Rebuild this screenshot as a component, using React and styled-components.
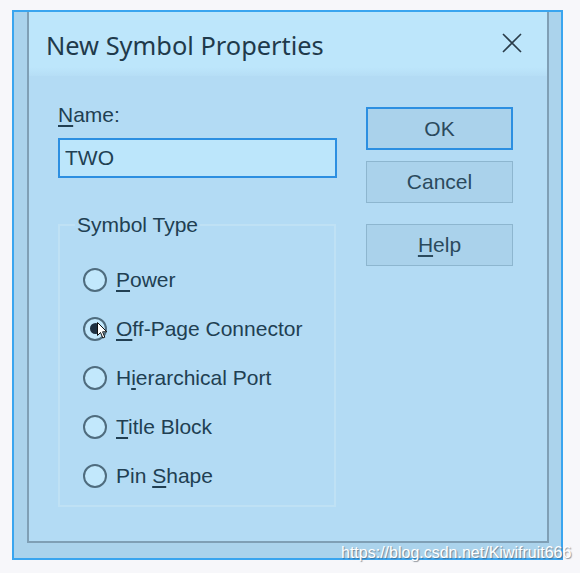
import React from 'react';
import styled, { createGlobalStyle } from 'styled-components';

const GlobalStyle = createGlobalStyle`
  html, body {
    margin: 0;
    padding: 0;
    background: #f7f7fa;
  }
`;

const Screen = styled.div`
  position: relative;
  width: 580px;
  height: 573px;
  padding: 10px 0 0 12px;
  box-sizing: border-box;
  font-family: "Liberation Sans", Arial, sans-serif;
  color: #213f52;
`;

const Window = styled.div`
  width: 551px;
  height: 550px;
  box-sizing: border-box;
  border: 2px solid #3aa5ef;
  background: #abd3ec;
  padding: 0 12px 15px 13px;
  display: flex;
`;

const Client = styled.div`
  flex: 1;
  display: flex;
  flex-direction: column;
  border: 2px solid #7f9fb5;
  border-top: none;
  background: #b3dbf4;
`;

const TitleBar = styled.div`
  height: 64px;
  box-sizing: border-box;
  padding: 16px 25px 0 17px;
  display: flex;
  justify-content: space-between;
  align-items: flex-start;
  background: linear-gradient(to bottom, #bde6fb 86%, #b6def6 100%);
`;

const Title = styled.div`
  font-family: "Noto Sans", "Open Sans", sans-serif;
  font-size: 25.4px;
  line-height: 34px;
  color: #1f3a4b;
`;

const CloseIcon = styled.svg`
  margin-top: 5px;
  width: 20px;
  height: 20px;
`;

const Body = styled.div`
  flex: 1;
  display: flex;
  gap: 29px;
  padding: 27px 0 0 29px;
`;

const LeftColumn = styled.div`
  width: 279px;
  display: flex;
  flex-direction: column;
`;

const Label = styled.div`
  font-size: 21px;
  line-height: 24px;
`;

const Mnemonic = styled.u`
  text-decoration-thickness: 2px;
  text-underline-offset: 3px;
`;

const NameInput = styled.input`
  margin: 11px 0 0;
  height: 40px;
  box-sizing: border-box;
  border: 2px solid #2c8fe1;
  background: #bce6fb;
  padding: 0 5px;
  font-family: "Liberation Sans", Arial, sans-serif;
  font-size: 21px;
  color: #213f52;
  outline: none;
`;

const GroupBox = styled.fieldset`
  margin: 35px 1px 0 0;
  padding: 0 0 5px 0;
  border: 2px solid #bfe1f4;
  min-width: 0;
`;

const Legend = styled.legend`
  margin-left: 15px;
  padding: 0 2px;
  font-size: 21px;
  line-height: 24px;
`;

const RadioList = styled.div`
  display: flex;
  flex-direction: column;
  padding: 18px 0 0 23px;
`;

const RadioRow = styled.div`
  position: relative;
  height: 49px;
  display: flex;
  align-items: center;
  gap: 9px;
  font-size: 21px;
`;

const RadioCircle = styled.span`
  width: 24px;
  height: 24px;
  box-sizing: border-box;
  border-radius: 50%;
  border: 2px solid #4f6c7e;
  background: #c2e8fc;
  display: flex;
  align-items: center;
  justify-content: center;

  &::after {
    content: '';
    display: ${props => (props.$checked ? 'block' : 'none')};
    width: 11px;
    height: 11px;
    border-radius: 50%;
    background: #1e3142;
  }
`;

const Cursor = styled.svg`
  position: absolute;
  left: 14px;
  top: 18px;
  width: 11px;
  height: 17px;
`;

const ButtonColumn = styled.div`
  width: 147px;
  display: flex;
  flex-direction: column;
  padding-top: 4px;
`;

const DialogButton = styled.button`
  margin-top: ${props => props.$top || 0}px;
  height: ${props => (props.$default ? 43 : 42)}px;
  box-sizing: border-box;
  border: ${props => (props.$default ? '2px solid #2c8fe1' : '1px solid #8db6cf')};
  background: #aad2eb;
  font-family: "Liberation Sans", Arial, sans-serif;
  font-size: 21px;
  color: #2b4a5d;
  padding: 0;
`;

const Watermark = styled.div`
  position: absolute;
  left: 341px;
  top: 543px;
  font-family: "Liberation Sans", Arial, sans-serif;
  font-size: 16px;
  line-height: 19px;
  color: #ffffff;
  text-shadow: 1px 1px 1px rgba(60, 70, 80, 0.55);
  white-space: nowrap;
`;

const types = [
  { before: '', key: 'P', after: 'ower' },
  { before: '', key: 'O', after: 'ff-Page Connector', checked: true },
  { before: 'H', key: 'i', after: 'erarchical Port' },
  { before: '', key: 'T', after: 'itle Block' },
  { before: 'Pin ', key: 'S', after: 'hape' },
];

export default function App() {
  return (
    <Screen>
      <GlobalStyle />
      <Window>
        <Client>
          <TitleBar>
            <Title>New Symbol Properties</Title>
            <CloseIcon viewBox="0 0 20 20">
              <path d="M1 1 L19 19 M19 1 L1 19" stroke="#2a3c49" strokeWidth="1.6" fill="none" />
            </CloseIcon>
          </TitleBar>
          <Body>
            <LeftColumn>
              <Label><Mnemonic>N</Mnemonic>ame:</Label>
              <NameInput value="TWO" readOnly />
              <GroupBox>
                <Legend>Symbol Type</Legend>
                <RadioList>
                  {types.map(t => (
                    <RadioRow key={t.after}>
                      <RadioCircle $checked={t.checked} />
                      <span>{t.before}<Mnemonic>{t.key}</Mnemonic>{t.after}</span>
                      {t.checked && (
                        <Cursor viewBox="0 0 11 17">
                          <path d="M0.5 0.5 L0.5 13.5 L3.5 10.5 L5.8 16 L7.8 15.2 L5.6 9.8 L9.8 9.8 Z" fill="#ffffff" stroke="#111111" strokeWidth="1" />
                        </Cursor>
                      )}
                    </RadioRow>
                  ))}
                </RadioList>
              </GroupBox>
            </LeftColumn>
            <ButtonColumn>
              <DialogButton $default>OK</DialogButton>
              <DialogButton $top={11}>Cancel</DialogButton>
              <DialogButton $top={21}><Mnemonic>H</Mnemonic>elp</DialogButton>
            </ButtonColumn>
          </Body>
        </Client>
      </Window>
      <Watermark>https://blog.csdn.net/Kiwifruit666</Watermark>
    </Screen>
  );
}
